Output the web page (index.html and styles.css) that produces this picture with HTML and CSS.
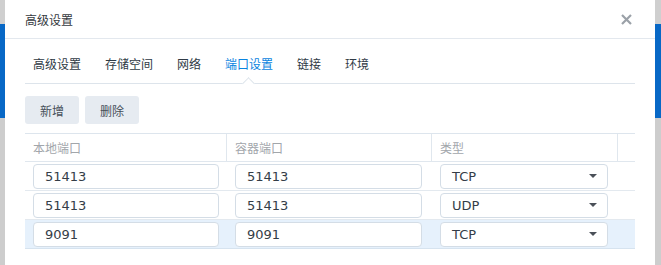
FILE: index.html
```html
<!DOCTYPE html>
<html lang="zh-CN">
<head>
    <meta charset="UTF-8">
    <title>高级设置</title>
    <link rel="stylesheet" href="styles.css">
</head>
<body>
    <div class="dialog">
        <div class="dialog-header">
            <span class="dialog-title">高级设置</span>
            <span class="close-btn">
                <svg width="11" height="11" viewBox="0 0 11 11">
                    <path d="M1 1 L10 10 M10 1 L1 10" stroke="#9ba1a8" stroke-width="2.2" fill="none"/>
                </svg>
            </span>
        </div>
        <div class="dialog-body">
            <div class="tabs">
                <span class="tab">高级设置</span>
                <span class="tab">存储空间</span>
                <span class="tab">网络</span>
                <span class="tab active">端口设置</span>
                <span class="tab">链接</span>
                <span class="tab">环境</span>
            </div>
            <div class="toolbar">
                <button class="btn">新增</button>
                <button class="btn">删除</button>
            </div>
            <div class="grid">
                <div class="th">本地端口</div>
                <div class="th">容器端口</div>
                <div class="th">类型</div>
                <div class="th last"></div>

                <div class="td"><div class="field">51413</div></div>
                <div class="td"><div class="field">51413</div></div>
                <div class="td"><div class="field select">TCP<i class="caret"></i></div></div>
                <div class="td"></div>

                <div class="td"><div class="field">51413</div></div>
                <div class="td"><div class="field">51413</div></div>
                <div class="td"><div class="field select">UDP<i class="caret"></i></div></div>
                <div class="td"></div>

                <div class="td sel"><div class="field">9091</div></div>
                <div class="td sel"><div class="field">9091</div></div>
                <div class="td sel"><div class="field select">TCP<i class="caret"></i></div></div>
                <div class="td sel"></div>
            </div>
        </div>
    </div>
</body>
</html>
```

FILE: styles.css
```css
body {
    margin: 0;
    height: 265px;
    overflow: hidden;
    background: linear-gradient(to bottom, #cfcfcf 0, #cfcfcf 24px, #0868c6 24px, #0868c6 118px, #cdcdcd 118px);
    font-family: "DejaVu Sans", "Noto Sans CJK SC", sans-serif;
}

.dialog {
    margin: 0 6px 0 5px;
    height: 265px;
    background: #fff;
}

.dialog-header {
    height: 38px;
    border-bottom: 1px solid #e3e8ee;
    display: flex;
    align-items: center;
    justify-content: space-between;
    padding: 0 23px 0 20px;
}

.dialog-title {
    font-family: "Noto Sans CJK SC", sans-serif;
    font-size: 12px;
    color: #35393e;
}

.close-btn {
    display: flex;
    margin-top: 1px;
}

.dialog-body {
    padding: 0 20px;
}

.tabs {
    height: 45px;
    box-sizing: border-box;
    border-bottom: 1px solid #dde4eb;
    display: flex;
    align-items: flex-end;
    gap: 24px;
    padding: 0 0 11px 8px;
}

.tab {
    position: relative;
    font-family: "Noto Sans CJK SC", sans-serif;
    font-size: 12px;
    line-height: 16px;
    color: #2f3a45;
}

.tab.active {
    color: #0a84e0;
}

.tab.active::after {
    content: '';
    position: absolute;
    left: 50%;
    bottom: -16px;
    width: 8px;
    height: 8px;
    margin-left: -5px;
    background: #fff;
    border-left: 1px solid #dde4eb;
    border-top: 1px solid #dde4eb;
    transform: rotate(45deg);
}

.toolbar {
    display: flex;
    gap: 6px;
    margin-top: 12px;
}

.btn {
    height: 28px;
    padding: 0 15px;
    border: none;
    border-radius: 3px;
    background: #e6ebf1;
    font-family: "Noto Sans CJK SC", sans-serif;
    font-size: 12px;
    color: #47505a;
}

.grid {
    margin-top: 9px;
    display: grid;
    grid-template-columns: 202px 205px 186px 17px;
    border-top: 1px solid #dde5ed;
}

.th {
    height: 27px;
    border-bottom: 1px solid #e0e7ee;
    border-right: 1px solid #e0e7ee;
    display: flex;
    align-items: center;
    padding-left: 8px;
    font-family: "Noto Sans CJK SC", sans-serif;
    font-size: 12px;
    color: #a2a6ab;
}

.th.last {
    border-right: none;
}

.td {
    height: 28px;
    border-bottom: 1px solid #e3e9ef;
    display: flex;
    align-items: center;
    padding-left: 8px;
}

.td.sel {
    background: #e6f1fc;
    border-bottom-color: #d6e3ef;
}

.field {
    width: 186px;
    height: 25px;
    box-sizing: border-box;
    border: 1px solid #d4dde6;
    border-radius: 4px;
    background: #fff;
    padding-left: 11px;
    display: flex;
    align-items: center;
    font-size: 13px;
    color: #343d47;
}

.td:nth-child(4n+2) .field {
    width: 187px;
}

.field.select {
    width: 168px;
    justify-content: space-between;
    padding-right: 10px;
}

.caret {
    width: 0;
    height: 0;
    border-left: 4px solid transparent;
    border-right: 4px solid transparent;
    border-top: 4px solid #4a5058;
}
```
